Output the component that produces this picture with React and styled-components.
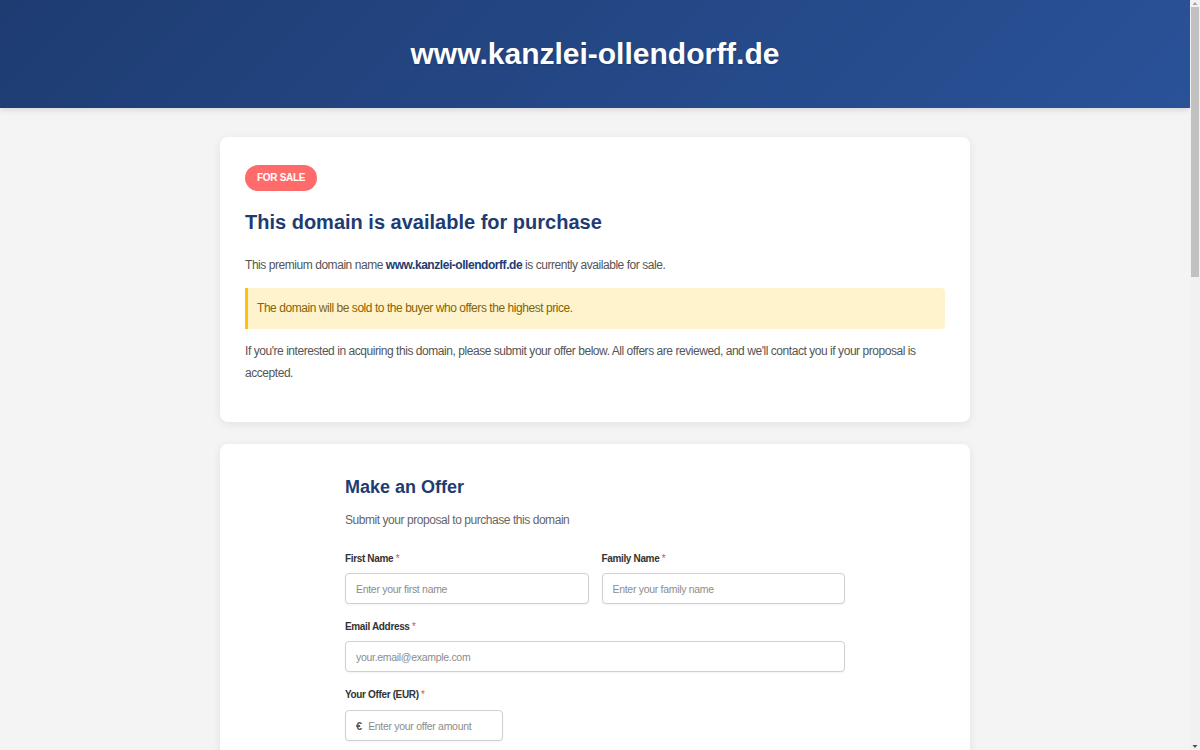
import React from "react";
import styled, { createGlobalStyle } from "styled-components";

const SANS = `"Liberation Sans", Arial, Helvetica, sans-serif`;

const GlobalStyle = createGlobalStyle`
  html, body { margin: 0; padding: 0; }
  body {
    background: #f4f4f4;
    font-family: ${SANS};
    color: #555;
    margin-right: 10px;
  }
  * { box-sizing: border-box; }
  ::-webkit-scrollbar { width: 0; height: 0; }
`;

const Header = styled.header`
  height: 108px;
  display: flex;
  align-items: center;
  justify-content: center;
  background: linear-gradient(135deg, #1e3c72 0%, #2a5298 100%);
  box-shadow: 0 2px 6px rgba(0, 0, 0, 0.12);
`;

const SiteTitle = styled.h1`
  margin: 0;
  font-family: ${SANS};
  font-weight: 700;
  font-size: 30px;
  line-height: 36px;
  color: #ffffff;
  text-shadow: 0 1px 2px rgba(0, 0, 0, 0.2);
`;

const Main = styled.main`
  max-width: 750px;
  margin: 29px auto 0;
  display: flex;
  flex-direction: column;
  gap: 22px;
  padding-bottom: 40px;
`;

const Card = styled.section`
  background: #ffffff;
  border-radius: 8px;
  box-shadow: 0 2px 10px rgba(0, 0, 0, 0.08);
  padding: ${(p) => p.$pad || "28px 25px 38px"};
`;

const Badge = styled.span`
  display: block;
  width: fit-content;
  height: 26px;
  padding: 0 12px;
  border-radius: 13px;
  background: #ff6b6b;
  color: #ffffff;
  font-weight: 700;
  font-size: 10px;
  line-height: 26px;
  letter-spacing: -0.3px;
  text-transform: uppercase;
`;

const Title = styled.h2`
  margin: ${(p) => p.$margin || "17px 0 0"};
  font-weight: 700;
  font-size: ${(p) => p.$size || "20px"};
  line-height: ${(p) => p.$lh || "29px"};
  color: #1e3c72;
`;

const Text = styled.p`
  margin: ${(p) => p.$margin || "17px 0 0"};
  font-size: 12px;
  letter-spacing: -0.45px;
  line-height: 22px;
  color: ${(p) => p.$color || "#555"};

  strong {
    color: #1e3c72;
    font-weight: 700;
  }
`;

const Notice = styled.div`
  margin-top: 12px;
  padding: 10px 12px 10px 9px;
  background: #fff3cd;
  border-left: 3px solid #ffc107;
  border-radius: 0 4px 4px 0;
  font-size: 12px;
  letter-spacing: -0.45px;
  line-height: 21px;
  color: #856404;
`;

const Form = styled.form`
  max-width: 500px;
  margin: 0 auto;
`;

const Row = styled.div`
  display: grid;
  grid-template-columns: 1fr 1fr;
  gap: 13px;
  margin-top: ${(p) => p.$mt || "15px"};
`;

const Group = styled.div`
  margin-top: ${(p) => p.$mt || "15px"};
  display: flex;
  flex-direction: column;
`;

const Label = styled.label`
  display: block;
  margin-bottom: ${(p) => p.$mb || "6px"};
  font-weight: 700;
  font-size: 10px;
  letter-spacing: -0.35px;
  line-height: 16px;
  color: #333;
`;

const Req = styled.span`
  color: #e74c3c;
  font-weight: 400;
`;

const fieldBox = `
  height: 31px;
  border: 1px solid #d0d0d0;
  border-radius: 4px;
  background: #fff;
  box-shadow: 0 1px 2px rgba(0, 0, 0, 0.05);
`;

const Input = styled.input`
  ${fieldBox}
  width: 100%;
  padding: 0 10px;
  font-family: ${SANS};
  font-size: 10.5px;
  letter-spacing: -0.3px;
  color: #333;
  outline: none;

  &::placeholder {
    color: #8c8c8c;
  }
`;

const MoneyBox = styled.div`
  ${fieldBox}
  width: 158px;
  display: flex;
  align-items: center;
  padding: 0 10px;
  gap: 6px;
`;

const Currency = styled.span`
  font-weight: 700;
  font-size: 11px;
  color: #555;
`;

const BareInput = styled.input`
  flex: 1;
  min-width: 0;
  border: none;
  outline: none;
  padding: 0;
  font-family: ${SANS};
  font-size: 10.5px;
  letter-spacing: -0.3px;
  color: #333;
  background: transparent;

  &::placeholder {
    color: #8c8c8c;
  }
`;

const TextArea = styled.textarea`
  width: 100%;
  height: 110px;
  padding: 8px 10px;
  border: 1px solid #d0d0d0;
  border-radius: 4px;
  resize: none;
  font-family: ${SANS};
  font-size: 10.5px;
  &::placeholder { color: #8c8c8c; }
`;

const Submit = styled.button`
  margin-top: 22px;
  width: 100%;
  height: 44px;
  border: none;
  border-radius: 4px;
  background: linear-gradient(135deg, #1e3c72 0%, #2a5298 100%);
  color: #fff;
  font-family: ${SANS};
  font-weight: 700;
  font-size: 14px;
`;

const Footer = styled.footer`
  padding: 24px 0 40px;
  text-align: center;
  font-size: 11px;
  color: #888;
`;

/* Window scrollbar as it appears in the screenshot (drawn over the page edge) */
const ScrollTrack = styled.div`
  position: fixed;
  top: 0;
  right: 0;
  bottom: 0;
  width: 10px;
  background: #f1f1f1;
  display: flex;
  flex-direction: column;
  align-items: center;
`;

const ScrollArrow = styled.svg`
  width: 10px;
  height: 7px;
  flex: none;
`;

const ScrollThumb = styled.div`
  width: 8px;
  height: 270px;
  background: #c1c1c1;
`;

const Spacer = styled.div`
  flex: 1;
`;

function WindowScrollbar() {
  return (
    <ScrollTrack aria-hidden="true">
      <ScrollArrow viewBox="0 0 10 7">
        <path d="M5 2 L7.5 5 L2.5 5 Z" fill="#a3a3a3" />
      </ScrollArrow>
      <ScrollThumb />
      <Spacer />
      <ScrollArrow viewBox="0 0 10 7">
        <path d="M2.5 2 L7.5 2 L5 5 Z" fill="#505050" />
      </ScrollArrow>
    </ScrollTrack>
  );
}

export default function App() {
  return (
    <>
      <GlobalStyle />
      <Header>
        <SiteTitle>www.kanzlei-ollendorff.de</SiteTitle>
      </Header>
      <Main>
        <Card>
          <Badge>For Sale</Badge>
          <Title>This domain is available for purchase</Title>
          <Text>
            This premium domain name <strong>www.kanzlei-ollendorff.de</strong> is currently
            available for sale.
          </Text>
          <Notice>The domain will be sold to the buyer who offers the highest price.</Notice>
          <Text $margin="11px 0 0">
            If you're interested in acquiring this domain, please submit your offer below. All
            offers are reviewed, and we'll contact you if your proposal is accepted.
          </Text>
        </Card>

        <Card $pad="30px 25px 30px">
          <Form onSubmit={(e) => e.preventDefault()}>
            <Title $margin="0" $size="18px" $lh="26px">
              Make an Offer
            </Title>
            <Text $margin="9px 0 0" $color="#666">
              Submit your proposal to purchase this domain
            </Text>
            <Row $mt="20px">
              <Group $mt="0">
                <Label>
                  First Name <Req>*</Req>
                </Label>
                <Input placeholder="Enter your first name" />
              </Group>
              <Group $mt="0">
                <Label>
                  Family Name <Req>*</Req>
                </Label>
                <Input placeholder="Enter your family name" />
              </Group>
            </Row>
            <Group>
              <Label>
                Email Address <Req>*</Req>
              </Label>
              <Input placeholder="your.email@example.com" />
            </Group>
            <Group>
              <Label $mb="7px">
                Your Offer (EUR) <Req>*</Req>
              </Label>
              <MoneyBox>
                <Currency>€</Currency>
                <BareInput placeholder="Enter your offer amount" />
              </MoneyBox>
            </Group>
            <Group $mt="20px">
              <Label>Message (optional)</Label>
              <TextArea placeholder="Add any additional information about your offer" />
            </Group>
            <Submit type="submit">Submit Offer</Submit>
          </Form>
        </Card>

        <Card $pad="26px 25px">
          <Title $margin="0" $size="18px" $lh="26px">
            Why this domain?
          </Title>
          <Text $margin="10px 0 0">
            A short, memorable domain name strengthens your brand and helps clients find you
            online. Secure it today before someone else does.
          </Text>
        </Card>
      </Main>
      <Footer>© 2024 www.kanzlei-ollendorff.de — All rights reserved.</Footer>
      <WindowScrollbar />
    </>
  );
}
